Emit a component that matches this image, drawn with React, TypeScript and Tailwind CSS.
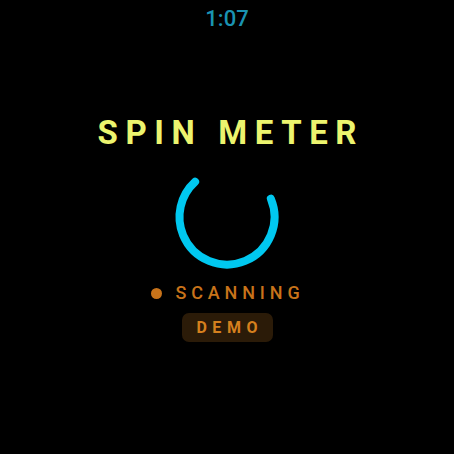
export default function App() {
  const r = 47.5;
  const c = 2 * Math.PI * r;
  const arc = c * (250 / 360);
  return (
    <div className="w-[454px] h-[454px] bg-black flex flex-col items-center" style={{ fontFamily: "Roboto, 'Liberation Sans', sans-serif" }}>
      <div className="mt-[8px] text-[22px] leading-[22px] font-medium text-[#1a93b2]">1:07</div>
      <div className="mt-[86px] text-[33px] leading-[33px] font-bold tracking-[0.23em] pl-[0.23em] text-[#ecf46e]">SPIN METER</div>
      <svg className="mt-[12px]" width="112" height="112" viewBox="0 0 112 112">
        <circle
          cx="56"
          cy="56"
          r={r}
          fill="none"
          stroke="#00c8f0"
          strokeWidth="8"
          strokeLinecap="round"
          strokeDasharray={`${arc} ${c}`}
          transform="rotate(-22.6 56 56)"
        />
      </svg>
      <div className="mt-[11px] flex items-center gap-[13px] pl-[2px]">
        <span className="w-[11px] h-[11px] rounded-full bg-[#c8731a]" />
        <span className="text-[18px] leading-[18px] font-medium tracking-[0.27em] text-[#c8731a]">SCANNING</span>
      </div>
      <div className="mt-[11px] w-[91px] h-[29px] rounded-[7px] bg-[#2b1b08] flex items-center justify-center">
        <span className="text-[16px] leading-[16px] font-bold tracking-[0.35em] pl-[0.35em] text-[#d5801e]">DEMO</span>
      </div>
    </div>
  );
}
